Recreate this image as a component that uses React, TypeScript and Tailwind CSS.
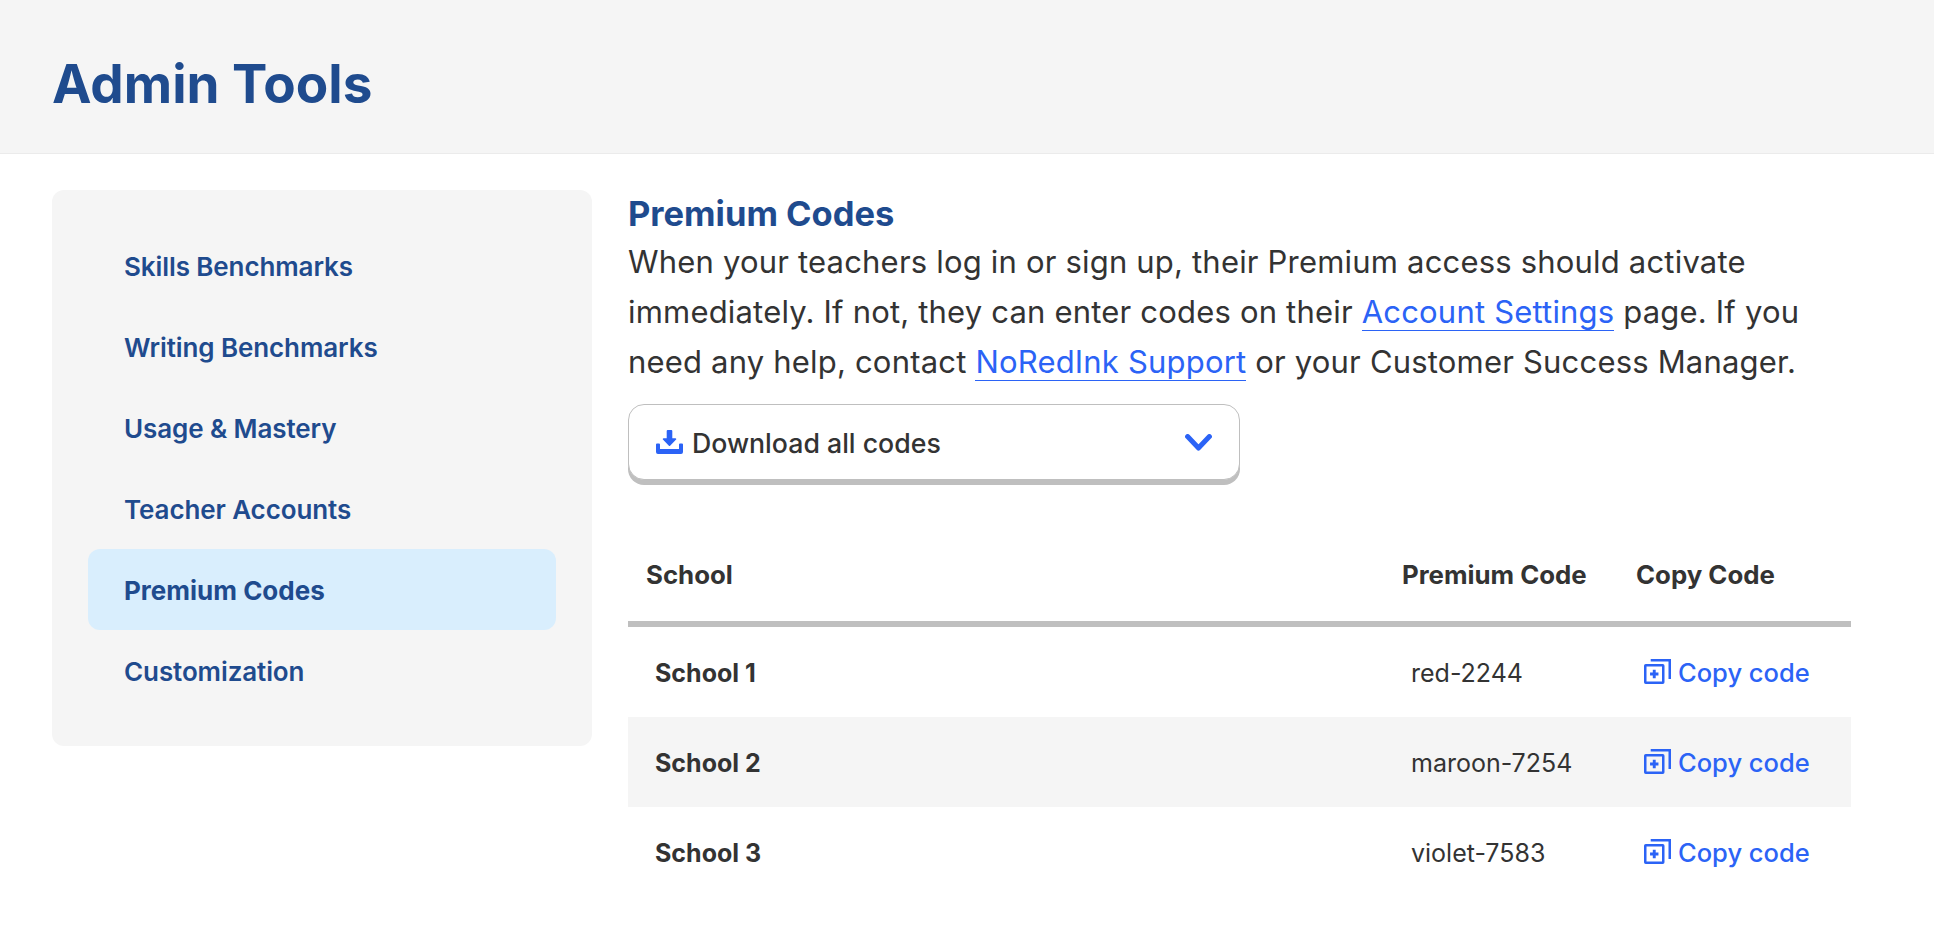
const nav = ["Skills Benchmarks", "Writing Benchmarks", "Usage & Mastery", "Teacher Accounts", "Premium Codes", "Customization"];
const rows = [
  ["School 1", "red-2244"],
  ["School 2", "maroon-7254"],
  ["School 3", "violet-7583"],
];

function DownloadIcon() {
  return (
    <svg width="27" height="24" viewBox="0 0 27 24" fill="#2b63f6" className="shrink-0">
      <path d="M10.7 1a1 1 0 0 1 1-1h3.6a1 1 0 0 1 1 1v7.2h3.2a.8.8 0 0 1 .6 1.3l-6 6.2a.8.8 0 0 1-1.2 0l-6-6.2a.8.8 0 0 1 .6-1.3h3.2z" />
      <path d="M0 14.5a1 1 0 0 1 1-1h2a1 1 0 0 1 1 1V19h19v-4.5a1 1 0 0 1 1-1h2a1 1 0 0 1 1 1V22a2 2 0 0 1-2 2H2a2 2 0 0 1-2-2z" />
    </svg>
  );
}

function Chevron() {
  return (
    <svg width="27" height="17" viewBox="0 0 27 17" fill="none" stroke="#2b63f6" strokeWidth="5" strokeLinecap="round" strokeLinejoin="round">
      <path d="M2.6 2.6l10.9 11.4L24.4 2.6" />
    </svg>
  );
}

function CopyIcon() {
  return (
    <svg width="27" height="25" viewBox="0 0 27 25" fill="none" stroke="#2b63f6" strokeWidth="2.5" className="mb-[3px] shrink-0">
      <rect x="1.25" y="6.25" width="18" height="17.5" rx="0.5" />
      <path d="M6.7 1.25h19.05v18.75" />
      <path d="M10.25 10.8v8.4M6.05 15h8.4" strokeWidth="2.9" />
    </svg>
  );
}

export default function App() {
  return (
    <div className="min-h-[950px] bg-white text-[#333] font-['Inter','Noto_Sans',sans-serif]">
      <header className="flex h-[154px] items-center border-b border-[#ebebeb] bg-[#f5f5f5] px-[52px] pt-[16px]">
        <h1 className="text-[53px] font-bold leading-none text-[#1f4b8e]">Admin Tools</h1>
      </header>
      <div className="flex items-start gap-[36px] px-[52px] pt-[36px]">
        <nav className="flex h-[556px] w-[540px] shrink-0 flex-col rounded-[12px] bg-[#f5f5f5] px-[36px] pt-[35px]">
          {nav.map((n) => (
            <a key={n} className={`flex h-[81px] shrink-0 items-center rounded-[12px] px-[36px] pt-[2px] text-[26px] text-[#1f4b8e] ${n === "Premium Codes" ? "bg-[#d9eefd] font-bold" : "font-semibold tracking-[-0.1px]"}`}>
              {n}
            </a>
          ))}
        </nav>
        <main className="w-[1223px]">
          <h2 className="flex h-[47px] items-center text-[34.5px] font-bold text-[#1f4b8e]">Premium Codes</h2>
          <p className="text-[31px] leading-[50px] tracking-[0.19px]">
            When your teachers log in or sign up, their Premium access should activate
            <br />
            immediately. If not, they can enter codes on their{" "}
            <a className="border-b border-[#2b63f6] text-[#2b63f6]">Account Settings</a> page. If you
            <br />
            need any help, contact <a className="border-b border-[#2b63f6] text-[#2b63f6]">NoRedInk Support</a> or your Customer Success Manager.
          </p>
          <button className="mt-[17px] flex h-[76px] w-[612px] items-center justify-between rounded-[16px] border-[1.5px] border-[#bfbfbf] bg-white px-[27px] shadow-[0_5px_0_0_#bfbfbf]">
            <span className="flex items-center gap-[9px] text-[26.7px] font-medium">
              <DownloadIcon />
              <span className="pt-[3px]">Download all codes</span>
            </span>
            <Chevron />
          </button>
          <table className="mt-[49px] w-full table-fixed border-separate border-spacing-0">
            <thead>
              <tr className="text-left text-[25.8px]">
                <th className="h-[98px] w-[774px] border-b-[6px] border-[#bfbfbf] pl-[18px] font-bold">School</th>
                <th className="h-[98px] w-[234px] border-b-[6px] border-[#bfbfbf] font-bold">Premium Code</th>
                <th className="h-[98px] border-b-[6px] border-[#bfbfbf] font-bold">Copy Code</th>
              </tr>
            </thead>
            <tbody>
              {rows.map(([s, c], i) => (
                <tr key={s} className={`h-[90px] text-[25px] ${i === 1 ? "bg-[#f5f5f5]" : ""}`}>
                  <td className="pl-[27px] pt-[4px] font-bold">{s}</td>
                  <td className="pl-[9px] pt-[4px]">{c}</td>
                  <td className="pl-[8px] pt-[2px]">
                    <a className="flex items-center gap-[7px] text-[25.5px] font-medium text-[#2b63f6]">
                      <CopyIcon />
                      Copy code
                    </a>
                  </td>
                </tr>
              ))}
            </tbody>
          </table>
        </main>
      </div>
    </div>
  );
}
